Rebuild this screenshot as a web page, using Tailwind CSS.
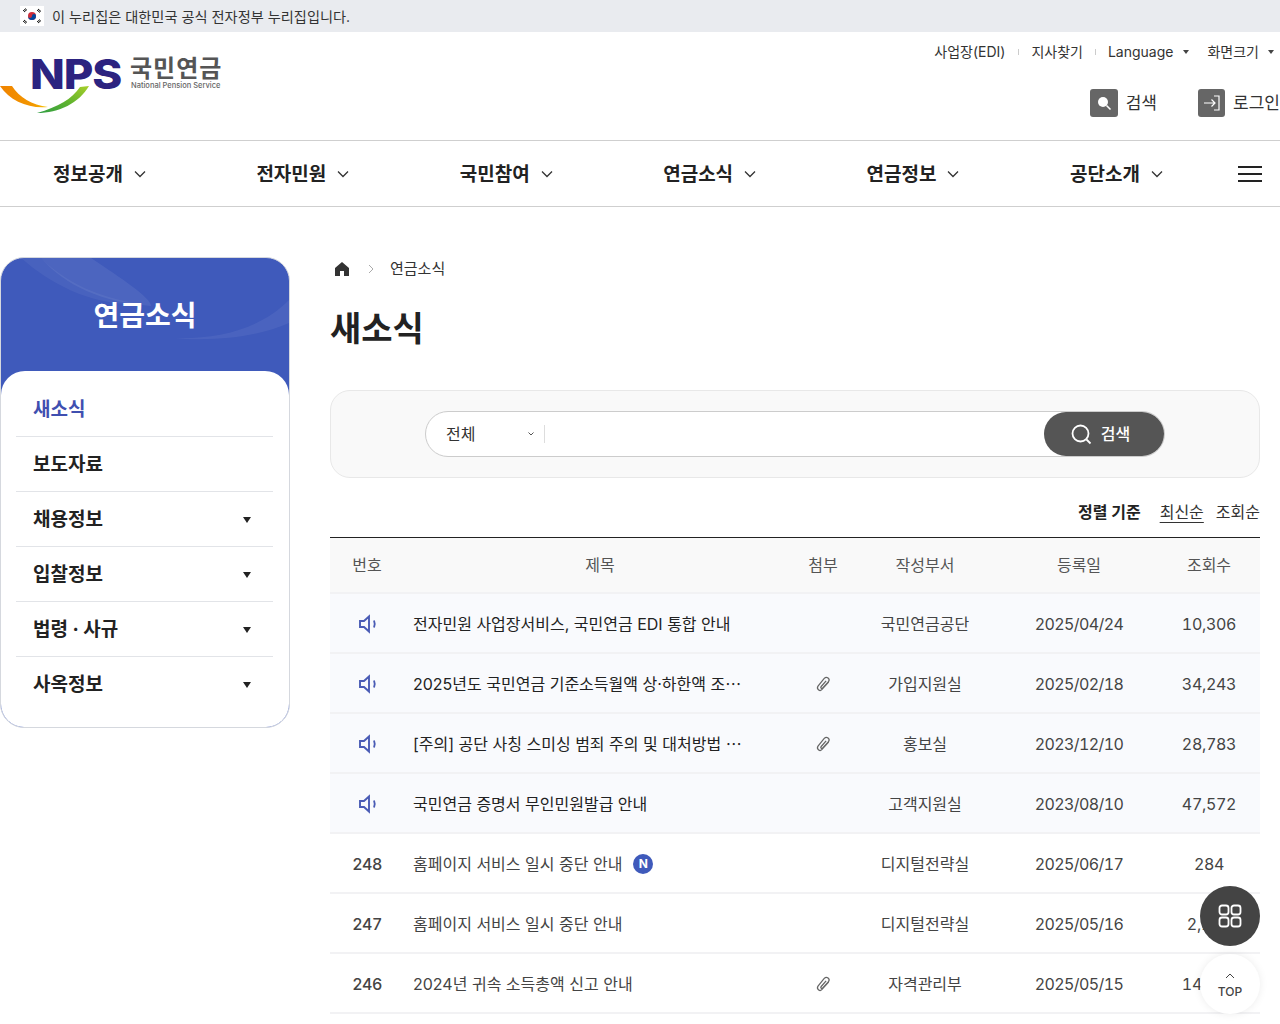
<!DOCTYPE html>
<html lang="ko">
<head>
<meta charset="utf-8">
<title>새소식 | 국민연금공단</title>
<script src="https://cdn.jsdelivr.net/npm/@tailwindcss/browser@4"></script>
</head>
<body class="relative h-[1024px] w-[1280px] overflow-hidden bg-white font-['Inter','Noto_Sans_CJK_KR',sans-serif] text-[#222]">

<!-- 공식 누리집 배너 -->
<div class="flex h-8 items-center bg-[#e9ebef] pl-5 text-[14.200px] text-[#333]">
  <svg class="mr-[8px] h-[20px] w-[24px]" viewBox="0 0 24 20">
    <rect width="24" height="20" fill="#fff"/>
    <circle cx="12" cy="10" r="4" fill="#cd2e3a"/>
    <path d="M8 10a4 4 0 0 0 8 0a2 2 0 0 0-4 0a2 2 0 0 1-4 0z" fill="#0047a0"/>
    <path d="M3 5l3-2.500M4 6l3-2.500M18 3l3 2.500M17 4l3 2.500M3 15l3 2.500M4 14l3 2.500M18 17l3-2.500M17 16l3-2.500" stroke="#111" stroke-width="1"/>
  </svg>
  <span class="pt-px">이 누리집은 대한민국 공식 전자정부 누리집입니다.</span>
</div>

<!-- 헤더 -->
<header class="flex h-[109px] justify-between border-b border-[#cfcfcf]">
  <div class="relative w-[240px]">
    <span class="absolute left-[30px] top-[15px] origin-left scale-x-[1.11] text-[41px] font-extrabold leading-[55px] tracking-[-1px] text-[#2c2380]">NPS</span>
    <svg class="absolute left-0 top-[52px]" width="92" height="30" viewBox="0 0 92 30">
      <defs>
        <linearGradient id="sw1" x1="0" x2="1" y1="0" y2="0"><stop offset="0" stop-color="#f08300"/><stop offset=".7" stop-color="#f39800"/><stop offset="1" stop-color="#f7c600"/></linearGradient>
        <linearGradient id="sw2" x1="0" x2="1" y1="1" y2="0"><stop offset="0" stop-color="#2f9e44"/><stop offset=".5" stop-color="#5fb32e"/><stop offset="1" stop-color="#a8cf2a"/></linearGradient>
      </defs>
      <path d="M0 2h12c7 11 20 19 36 21c-19 2-38-6-48-21z" fill="url(#sw1)"/>
      <path d="M37 29c22 0 42-10 52-27l-9 1c-8 12-22 20-43 26z" fill="url(#sw2)"/>
    </svg>
    <span class="absolute left-[130px] top-[20px] text-[24px] font-bold leading-[34px] tracking-[1px] text-[#555]">국민연금</span>
    <span class="absolute left-[131px] top-[48px] text-[7.500px] font-medium leading-[11px] text-[#666]">National Pension Service</span>
  </div>
  <div class="flex flex-col items-end">
    <div class="flex h-[39px] items-center text-[14px] text-[#333]">
      <span>사업장(EDI)</span>
      <span class="mx-[12.500px] h-[6px] w-px bg-[#ccc]"></span>
      <span>지사찾기</span>
      <span class="mx-[12px] h-[6px] w-px bg-[#ccc]"></span>
      <span>Language</span>
      <span class="ml-[10px] h-0 w-0 border-x-[3.500px] border-t-[4px] border-x-transparent border-t-[#444]"></span>
      <span class="ml-[18px]">화면크기</span>
      <span class="ml-[9px] mr-[6px] h-0 w-0 border-x-[3.500px] border-t-[4px] border-x-transparent border-t-[#444]"></span>
    </div>
    <div class="mt-[18px] flex items-center text-[17px] text-[#333]">
      <span class="flex h-[28px] w-[28px] items-center justify-center rounded-[3px] bg-[#666]">
        <svg class="h-[18px] w-[18px]" viewBox="0 0 18 18"><circle cx="8" cy="8" r="5" fill="#fff"/><path d="M11.500 11.500l4 4" stroke="#fff" stroke-width="1.600"/></svg>
      </span>
      <span class="ml-[8px] pt-[2px]">검색</span>
      <span class="ml-[41px] flex h-[28px] w-[27px] items-center justify-center rounded-[3px] bg-[#666]">
        <svg class="h-[20px] w-[20px]" viewBox="0 0 20 20" fill="none" stroke="#fff" stroke-width="1.200"><path d="M2 10h11M9.500 6.500l3.500 3.500l-3.500 3.500M12 3h5v14h-5"/></svg>
      </span>
      <span class="ml-[8px] w-[47px] whitespace-nowrap pt-[2px]">로그인</span>
    </div>
  </div>
</header>

<!-- 메인 메뉴 -->
<nav class="flex h-[66px] items-center border-b border-[#cfcfcf] pl-[53px] pr-[18px] text-[19px] font-bold text-[#222]">
  <div class="flex w-[203.400px] items-center"><span class="pt-[3px]">정보공개</span><svg class="ml-[11px] h-[10px] w-[12px]" viewBox="0 0 12 10" fill="none" stroke="#333" stroke-width="1.300"><path d="M1 2.500l5 5l5-5"/></svg></div>
  <div class="flex w-[203.400px] items-center"><span class="pt-[3px]">전자민원</span><svg class="ml-[11px] h-[10px] w-[12px]" viewBox="0 0 12 10" fill="none" stroke="#333" stroke-width="1.300"><path d="M1 2.500l5 5l5-5"/></svg></div>
  <div class="flex w-[203.400px] items-center"><span class="pt-[3px]">국민참여</span><svg class="ml-[11px] h-[10px] w-[12px]" viewBox="0 0 12 10" fill="none" stroke="#333" stroke-width="1.300"><path d="M1 2.500l5 5l5-5"/></svg></div>
  <div class="flex w-[203.400px] items-center"><span class="pt-[3px]">연금소식</span><svg class="ml-[11px] h-[10px] w-[12px]" viewBox="0 0 12 10" fill="none" stroke="#333" stroke-width="1.300"><path d="M1 2.500l5 5l5-5"/></svg></div>
  <div class="flex w-[203.400px] items-center"><span class="pt-[3px]">연금정보</span><svg class="ml-[11px] h-[10px] w-[12px]" viewBox="0 0 12 10" fill="none" stroke="#333" stroke-width="1.300"><path d="M1 2.500l5 5l5-5"/></svg></div>
  <div class="flex items-center"><span class="pt-[3px]">공단소개</span><svg class="ml-[11px] h-[10px] w-[12px]" viewBox="0 0 12 10" fill="none" stroke="#333" stroke-width="1.300"><path d="M1 2.500l5 5l5-5"/></svg></div>
  <div class="ml-auto flex w-6 flex-col gap-[5px]">
    <span class="h-[2px] bg-[#222]"></span>
    <span class="h-[2px] bg-[#222]"></span>
    <span class="h-[2px] bg-[#222]"></span>
  </div>
</nav>

<div class="flex items-start pr-5 pt-[50px]">
  <!-- 사이드 메뉴 -->
  <aside class="w-[290px] overflow-hidden rounded-[24px] border border-[#d5d8de] bg-[#3f5abb]">
    <div class="relative h-[113px] overflow-hidden">
      <svg class="absolute inset-0" width="290" height="113" viewBox="0 0 290 113">
        <path d="M40 0c30 30 70 42 100 46c-50 2-90-20-120-46z" fill="#fff" fill-opacity=".05"/>
        <path d="M40 0h50c30 20 60 40 60 48c-50-4-85-20-110-48z" fill="#fff" fill-opacity=".07"/>
        <path d="M170 80c45 2 90-8 120-40v24c-30 14-72 20-120 16z" fill="#fff" fill-opacity=".06"/>
      </svg>
      <h2 class="relative pt-[36px] text-center text-[28px] font-bold leading-[44px] text-white">연금소식</h2>
    </div>
    <ul class="rounded-t-[24px] bg-white pl-[15px] pr-[16px] text-[19px] font-bold leading-[28px] text-[#222]">
      <li class="flex h-[66px] items-center border-b border-[#e2e4e8] pl-[17px] pt-[13px] text-[#3f4fb0]">새소식</li>
      <li class="flex h-[55px] items-center border-b border-[#e2e4e8] pl-[17px] pt-px">보도자료</li>
      <li class="flex h-[55px] items-center justify-between border-b border-[#e2e4e8] pl-[17px] pr-[22px] pt-px"><span>채용정보</span><span class="h-0 w-0 border-x-[4px] border-t-[6px] border-x-transparent border-t-[#222]"></span></li>
      <li class="flex h-[55px] items-center justify-between border-b border-[#e2e4e8] pl-[17px] pr-[22px] pt-px"><span>입찰정보</span><span class="h-0 w-0 border-x-[4px] border-t-[6px] border-x-transparent border-t-[#222]"></span></li>
      <li class="flex h-[55px] items-center justify-between border-b border-[#e2e4e8] pl-[17px] pr-[22px] pt-px"><span>법령 · 사규</span><span class="h-0 w-0 border-x-[4px] border-t-[6px] border-x-transparent border-t-[#222]"></span></li>
      <li class="flex h-[70px] items-start justify-between pl-[17px] pr-[22px] pt-[14px]"><span>사옥정보</span><span class="mt-[11px] h-0 w-0 border-x-[4px] border-t-[6px] border-x-transparent border-t-[#222]"></span></li>
    </ul>
  </aside>

  <main class="ml-[40px] mt-px w-[930px]">
    <!-- 경로 -->
    <div class="flex h-[22px] items-center pl-[3px] text-[15px] text-[#333]">
      <svg class="h-[18px] w-[18px]" viewBox="0 0 18 18"><path d="M9 2l7 6v8h-5v-5H7v5H2V8z" fill="#333"/></svg>
      <svg class="ml-[16px] mr-[15px] h-[10px] w-[8px]" viewBox="0 0 8 10" fill="none" stroke="#aaa"><path d="M2 1l4 4l-4 4"/></svg>
      <span>연금소식</span>
    </div>
    <h1 class="mt-[23px] text-[34px] font-bold leading-[52px] text-[#222]">새소식</h1>

    <!-- 검색 -->
    <div class="mt-[35px] flex h-[88px] items-center justify-center rounded-[20px] border border-[#e8e8e8] bg-[#f9f9f9]">
      <div class="flex h-[46px] w-[740px] items-center rounded-full border border-[#ccc] bg-white pl-5">
        <span class="w-[80px] text-[16px] text-[#333]">전체</span>
        <svg class="h-[8px] w-[10px]" viewBox="0 0 10 8" fill="none" stroke="#555"><path d="M2.500 2.500l2.500 2.500l2.500-2.500"/></svg>
        <span class="ml-[8px] h-[18px] w-px bg-[#ddd]"></span>
        <button class="ml-auto flex h-[44px] w-[120px] items-center justify-center rounded-full bg-[#555] pr-[8px] text-[16px] font-medium text-white">
          <svg class="mr-[9px] h-[22px] w-[22px]" viewBox="0 0 22 22" fill="none" stroke="#fff" stroke-width="1.800"><circle cx="10.500" cy="10.500" r="8"/><path d="M16.500 16.500l4 4"/></svg>
          검색
        </button>
      </div>
    </div>

    <!-- 정렬 -->
    <div class="mt-[21px] flex h-6 items-center justify-end pt-[2px] text-[16px] text-[#333]">
      <span class="font-bold text-[#222]">정렬 기준</span>
      <span class="ml-[19px] underline underline-offset-[4px]">최신순</span>
      <span class="ml-3">조회순</span>
    </div>

    <!-- 목록 -->
    <table class="mt-[14px] w-[930px] table-fixed border-t border-[#222] text-center text-[16px] tabular-nums text-[#444]">
      <colgroup>
        <col class="w-[74px]"><col class="w-[392px]"><col class="w-[54px]"><col class="w-[150px]"><col class="w-[158px]"><col class="w-[102px]">
      </colgroup>
      <thead>
        <tr class="h-[55px] border-b-2 border-[#f2f2f4] bg-[#f9f9f9] text-[#555]">
          <th class="font-normal">번호</th>
          <th class="font-normal">제목</th>
          <th class="font-normal">첨부</th>
          <th class="font-normal">작성부서</th>
          <th class="font-normal">등록일</th>
          <th class="font-normal">조회수</th>
        </tr>
      </thead>
      <tbody class="[&_td]:pt-[2px] [&_td:nth-child(1)]:tracking-[-0.500px] [&_td:nth-child(2)]:[font-variant-numeric:normal] [&_td:nth-child(5)]:tracking-[-0.600px] [&_td:nth-child(6)]:tracking-[-0.300px]">
        <tr class="h-[60px] border-b-2 border-[#f2f2f4] bg-[#f9fafd]">
          <td class="pl-[2px]"><svg class="mx-auto h-[22px] w-[22px]" viewBox="0 0 22 22" fill="none" stroke="#4a5bb5" stroke-width="1.900"><path d="M3 8h4l5-4.500v15L7 14H3zM17 7.500q1.500 3.500 0 7"/></svg></td>
          <td class="pl-[9px] text-left text-[#222]">전자민원 사업장서비스, 국민연금 EDI 통합 안내</td>
          <td></td><td>국민연금공단</td><td>2025/04/24</td><td>10,306</td>
        </tr>
        <tr class="h-[60px] border-b-2 border-[#f2f2f4] bg-[#f9fafd]">
          <td class="pl-[2px]"><svg class="mx-auto h-[22px] w-[22px]" viewBox="0 0 22 22" fill="none" stroke="#4a5bb5" stroke-width="1.900"><path d="M3 8h4l5-4.500v15L7 14H3zM17 7.500q1.500 3.500 0 7"/></svg></td>
          <td class="pl-[9px] text-left text-[#222]">2025년도 국민연금 기준소득월액 상·하한액 조⋯</td>
          <td><svg class="mx-auto h-[20px] w-[20px]" viewBox="0 0 16 16" fill="none" stroke="#666" stroke-width="1"><path d="M12.500 6.500L7 12.500c-1.500 1.700-4.500-.5-3-2.800L9 3.500c2-2 5 .3 3.400 2.700L7.800 11.200c-.8.900-2-.1-1.400-1L10.500 5.500"/></svg></td>
          <td>가입지원실</td><td>2025/02/18</td><td>34,243</td>
        </tr>
        <tr class="h-[60px] border-b-2 border-[#f2f2f4] bg-[#f9fafd]">
          <td class="pl-[2px]"><svg class="mx-auto h-[22px] w-[22px]" viewBox="0 0 22 22" fill="none" stroke="#4a5bb5" stroke-width="1.900"><path d="M3 8h4l5-4.500v15L7 14H3zM17 7.500q1.500 3.500 0 7"/></svg></td>
          <td class="pl-[9px] text-left text-[#222]">[주의] 공단 사칭 스미싱 범죄 주의 및 대처방법 ⋯</td>
          <td><svg class="mx-auto h-[20px] w-[20px]" viewBox="0 0 16 16" fill="none" stroke="#666" stroke-width="1"><path d="M12.500 6.500L7 12.500c-1.500 1.700-4.500-.5-3-2.800L9 3.500c2-2 5 .3 3.400 2.700L7.800 11.200c-.8.900-2-.1-1.400-1L10.500 5.500"/></svg></td>
          <td>홍보실</td><td>2023/12/10</td><td>28,783</td>
        </tr>
        <tr class="h-[60px] border-b-2 border-[#f2f2f4] bg-[#f9fafd]">
          <td class="pl-[2px]"><svg class="mx-auto h-[22px] w-[22px]" viewBox="0 0 22 22" fill="none" stroke="#4a5bb5" stroke-width="1.900"><path d="M3 8h4l5-4.500v15L7 14H3zM17 7.500q1.500 3.500 0 7"/></svg></td>
          <td class="pl-[9px] text-left text-[#222]">국민연금 증명서 무인민원발급 안내</td>
          <td></td><td>고객지원실</td><td>2023/08/10</td><td>47,572</td>
        </tr>
        <tr class="h-[60px] border-b-2 border-[#f2f2f4]">
          <td class="font-medium">248</td>
          <td class="pl-[9px] text-left"><div class="flex items-center">홈페이지 서비스 일시 중단 안내<span class="ml-[11px] flex h-5 w-5 items-center justify-center rounded-full bg-[#3f5abb] text-[12px] font-bold text-white">N</span></div></td>
          <td></td><td>디지털전략실</td><td>2025/06/17</td><td>284</td>
        </tr>
        <tr class="h-[60px] border-b-2 border-[#f2f2f4]">
          <td class="font-medium">247</td>
          <td class="pl-[9px] text-left">홈페이지 서비스 일시 중단 안내</td>
          <td></td><td>디지털전략실</td><td>2025/05/16</td><td>2,101</td>
        </tr>
        <tr class="h-[60px] border-b-2 border-[#f2f2f4]">
          <td class="font-medium">246</td>
          <td class="pl-[9px] text-left">2024년 귀속 소득총액 신고 안내</td>
          <td><svg class="mx-auto h-[20px] w-[20px]" viewBox="0 0 16 16" fill="none" stroke="#666" stroke-width="1"><path d="M12.500 6.500L7 12.500c-1.500 1.700-4.500-.5-3-2.800L9 3.500c2-2 5 .3 3.400 2.700L7.800 11.200c-.8.900-2-.1-1.400-1L10.500 5.500"/></svg></td>
          <td>자격관리부</td><td>2025/05/15</td><td>14,320</td>
        </tr>
      </tbody>
    </table>
  </main>
</div>

<!-- 플로팅 버튼 -->
<button class="absolute left-[1200px] top-[886px] flex h-[60px] w-[60px] items-center justify-center rounded-full bg-[#444]">
  <svg class="h-[24px] w-[24px]" viewBox="0 0 24 24" fill="none" stroke="#fff" stroke-width="1.800"><rect x="1.500" y="1.500" width="9" height="9" rx="2.500"/><rect x="13.500" y="1.500" width="9" height="9" rx="2.500"/><rect x="1.500" y="13.500" width="9" height="9" rx="2.500"/><rect x="13.500" y="13.500" width="9" height="9" rx="2.500"/></svg>
</button>
<button class="absolute left-[1200px] top-[954px] flex h-[60px] w-[60px] flex-col items-center justify-center rounded-full bg-white pt-[3px] text-[12px] font-medium leading-[14px] text-[#444] shadow-[0_0_8px_rgba(0,0,0,0.08)]">
  <svg class="mb-[6px] h-[6px] w-[10px]" viewBox="0 0 10 6" fill="none" stroke="#444"><path d="M1 5l4-4l4 4"/></svg>
  TOP
</button>
</body>
</html>
